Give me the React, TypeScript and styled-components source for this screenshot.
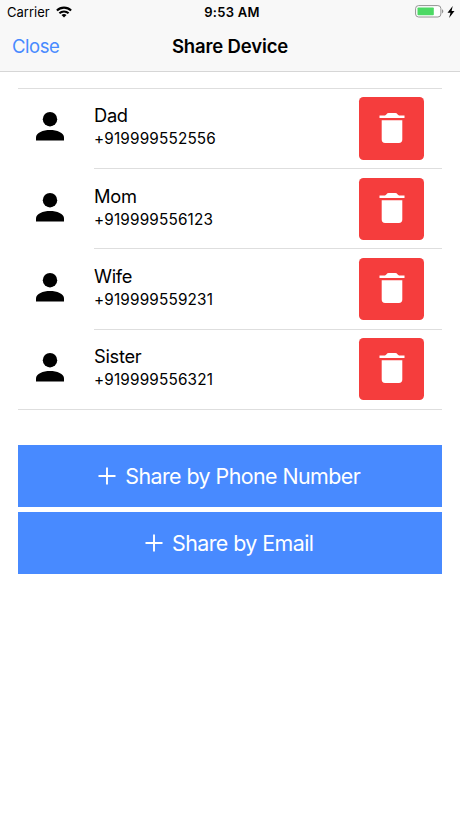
import React from "react";
import styled, { createGlobalStyle } from "styled-components";

const GlobalStyle = createGlobalStyle`
  * { box-sizing: border-box; }
  body {
    margin: 0;
    background: #fff;
    color: #000;
    font-family: Inter, "Liberation Sans", sans-serif;
  }
  button { font: inherit; border: 0; padding: 0; background: none; cursor: pointer; }
`;

const Screen = styled.main`
  width: 460px;
  height: 818px;
  overflow: hidden;
  background: #fff;
`;

const Header = styled.header`
  height: 72px;
  background: #f8f8f8;
  border-bottom: 1px solid #d6d6d6;
`;

const StatusBar = styled.div`
  height: 24px;
  display: grid;
  grid-template-columns: 1fr auto 1fr;
  align-items: center;
  padding: 0 5px 0 7px;
  font-size: 13px;
  line-height: 24px;
`;

const Carrier = styled.div`
  display: flex;
  align-items: center;
  gap: 6px;
  letter-spacing: 0;

  svg { margin-bottom: 1px; }
`;

const Clock = styled.div`
  font-weight: 600;
  letter-spacing: 0.25px;
  padding-left: 2px;
`;

const Power = styled.div`
  display: flex;
  justify-content: flex-end;
  align-items: center;
  gap: 3px;

  svg { margin-bottom: 1px; }
`;

const NavBar = styled.div`
  height: 44px;
  display: grid;
  grid-template-columns: 1fr auto 1fr;
  align-items: center;
  padding: 0 12px;
`;

const CloseButton = styled.button`
  justify-self: start;
  color: #488aff;
  font-size: 18.5px;
  line-height: 24px;
  letter-spacing: -0.45px;
`;

const Title = styled.h1`
  margin: 0;
  font-size: 18.5px;
  line-height: 24px;
  font-weight: 600;
  letter-spacing: -0.15px;
`;

const Content = styled.section`
  padding: 16px 18px 0;
`;

const ContactList = styled.ul`
  list-style: none;
  margin: 0 0 35.2px;
  padding: 0;
  border-top: 1px solid #dedede;
  border-bottom: 1px solid #dedede;
`;

const ContactRow = styled.li`
  height: 80.2px;
  display: flex;

  &:last-child { height: 79.6px; }
  &:last-child > div { border-bottom: 0; }
`;

const Avatar = styled.span`
  width: 76px;
  padding: 22.4px 0 0 18px;
`;

const ContactBody = styled.div`
  flex: 1;
  display: flex;
  justify-content: space-between;
  align-items: flex-start;
  padding: 8.4px 18px 0 0;
  border-bottom: 1px solid #dedede;
`;

const ContactText = styled.div`
  padding-top: 6px;
`;

const Name = styled.h2`
  margin: 0;
  font-size: 18.3px;
  line-height: 24px;
  font-weight: 400;
  letter-spacing: -0.3px;
`;

const Phone = styled.p`
  margin: 0;
  font-size: 15.3px;
  line-height: 24px;
  letter-spacing: 0.17px;
`;

const DeleteButton = styled.button`
  width: 65px;
  height: 62.3px;
  display: flex;
  align-items: center;
  justify-content: center;
  padding-bottom: 2px;
  border-radius: 4.5px;
  background: #f53d3d;
`;

const Actions = styled.div`
  display: grid;
  gap: 5px;
`;

const ShareButton = styled.button`
  height: 62px;
  display: flex;
  align-items: center;
  justify-content: center;
  gap: 9px;
  padding-right: 1.5px;
  background: #488aff;
  color: #fff;
  font-size: 21.4px;
  line-height: 28px;
  letter-spacing: -0.56px;
`;

const WifiIcon = () => (
  <svg width="16" height="12" viewBox="0 0 16 12" fill="none" stroke="#000" strokeWidth="2.1">
    <path d="M.9 4.5a10.2 10.2 0 0 1 14.2 0M3.4 7.3a6.6 6.6 0 0 1 9.2 0" />
    <path d="M8 11.6 5.5 9.1a3.6 3.6 0 0 1 5 0Z" fill="#000" stroke="none" />
  </svg>
);

const BatteryIcon = () => (
  <svg width="29" height="13" viewBox="0 0 29 13">
    <rect x=".6" y=".6" width="25.3" height="11.4" rx="3" fill="#fff" stroke="#929292" />
    <rect x="2.5" y="2.4" width="16.3" height="7.9" rx=".8" fill="#4cd964" />
    <path d="M27 4.2c1.8.7 1.8 3.5 0 4.2Z" fill="#929292" />
  </svg>
);

const BoltIcon = () => (
  <svg width="8" height="12" viewBox="0 0 8 12">
    <path d="M5.7 0 .5 6.7h3L2.1 12l5.4-7.1H4.6Z" />
  </svg>
);

const PersonIcon = () => (
  <svg width="28" height="30" viewBox="0 0 28 30">
    <circle cx="14" cy="8.2" r="7.2" />
    <path d="M0 29.4v-3.2C0 21.5 7.2 18.9 14 18.9s14 2.6 14 7.3v3.2Z" />
  </svg>
);

const TrashIcon = () => (
  <svg width="26" height="32" viewBox="0 0 26 32" fill="#fff">
    <path d="M.5 3.4h5.4c1.4 0 1.6-2.4 3.9-2.4h6.4c2.3 0 2.5 2.4 3.9 2.4h5.4v2.5H.5ZM2.7 8.2h20.6v19.4a3.4 3.4 0 0 1-3.4 3.4H6.1a3.4 3.4 0 0 1-3.4-3.4Z" />
  </svg>
);

const PlusIcon = () => (
  <svg width="18" height="18" viewBox="0 0 18 18" stroke="#fff" strokeWidth="1.9">
    <path d="M9 .5v17M.5 9h17" />
  </svg>
);

const contacts = [
  { name: "Dad", phone: "+919999552556" },
  { name: "Mom", phone: "+919999556123" },
  { name: "Wife", phone: "+919999559231" },
  { name: "Sister", phone: "+919999556321" },
];

export default function App() {
  return (
    <Screen>
      <GlobalStyle />
      <Header>
        <StatusBar>
          <Carrier>Carrier <WifiIcon /></Carrier>
          <Clock>9:53 AM</Clock>
          <Power><BatteryIcon /><BoltIcon /></Power>
        </StatusBar>
        <NavBar>
          <CloseButton>Close</CloseButton>
          <Title>Share Device</Title>
        </NavBar>
      </Header>
      <Content>
        <ContactList>
          {contacts.map(({ name, phone }) => (
            <ContactRow key={name}>
              <Avatar><PersonIcon /></Avatar>
              <ContactBody>
                <ContactText>
                  <Name>{name}</Name>
                  <Phone>{phone}</Phone>
                </ContactText>
                <DeleteButton aria-label={`Remove ${name}`}><TrashIcon /></DeleteButton>
              </ContactBody>
            </ContactRow>
          ))}
        </ContactList>
        <Actions>
          <ShareButton><PlusIcon />Share by Phone Number</ShareButton>
          <ShareButton><PlusIcon />Share by Email</ShareButton>
        </Actions>
      </Content>
    </Screen>
  );
}
